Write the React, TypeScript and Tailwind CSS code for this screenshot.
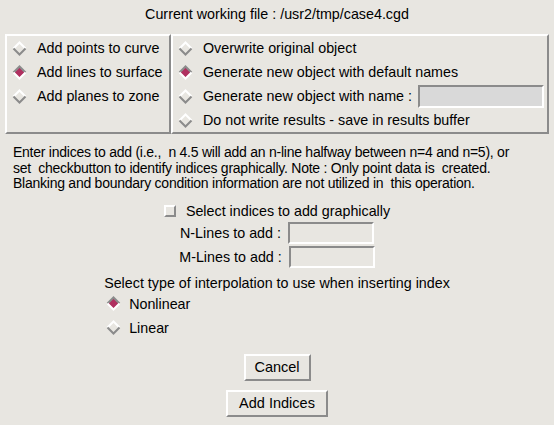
import React from "react";

const raised = "border-2 border-t-white border-l-white border-r-[#8b8b8b] border-b-[#8b8b8b]";
const sunken = "border-2 border-t-[#8b8b8b] border-l-[#8b8b8b] border-r-white border-b-white";

function Diamond({ on = false }: { on?: boolean }) {
  const top = on ? "#8b8b8b" : "#ffffff";
  const bottom = on ? "#ffffff" : "#8b8b8b";
  return (
    <svg width="15" height="15" viewBox="0 0 15 15" className="shrink-0">
      {on && <polygon points="7.5,2 13,7.5 7.5,13 2,7.5" fill="#b03060" />}
      <polyline points="1.5,7.5 7.5,1.5 13.5,7.5" fill="none" stroke={top} strokeWidth="2" />
      <polyline points="1.5,7.5 7.5,13.5 13.5,7.5" fill="none" stroke={bottom} strokeWidth="2" />
    </svg>
  );
}

function Radio({ label, on = false, children }: { label: string; on?: boolean; children?: React.ReactNode }) {
  return (
    <div className="flex h-[24px] items-center pl-[5px]">
      <Diamond on={on} />
      <span className="ml-[10px] whitespace-pre">{label}</span>
      {children}
    </div>
  );
}

export default function App() {
  return (
    <div
      className="flex h-[425px] w-[554px] flex-col bg-[#e8e6e1] text-[14.3px] leading-4 text-black"
      style={{ fontFamily: '"Liberation Sans", Arial, sans-serif' }}
    >
      <div className="h-[34px] pt-[6px] text-center">Current working file : /usr2/tmp/case4.cgd</div>

      <div className="flex h-[100px] px-[5px]">
        <div className={`w-[166px] ${raised}`}>
          <Radio label="Add points to curve" />
          <Radio label="Add lines to surface" on />
          <Radio label="Add planes to zone" />
        </div>
        <div className={`flex-1 ${raised}`}>
          <Radio label="Overwrite original object" />
          <Radio label="Generate new object with default names" on />
          <Radio label="Generate new object with name :">
            <div className={`ml-[6px] h-[23px] w-[126px] bg-[#d9d9d9] ${sunken}`} />
          </Radio>
          <Radio label="Do not write results - save in results buffer" />
        </div>
      </div>

      <p className="mt-[11px] whitespace-pre px-[13px] text-[14px] leading-[15.5px] tracking-[-0.25px]">
        {"Enter indices to add (i.e.,  n 4.5 will add an n-line halfway between n=4 and n=5), or"}
        <br />
        {"set  checkbutton to identify indices graphically. Note : Only point data is  created."}
        <br />
        {"Blanking and boundary condition information are not utilized in  this operation."}
      </p>

      <div className="flex flex-col items-center">
        <div className="mt-[11px] flex h-4 items-center">
          <div className="h-[12px] w-[12px] border-2 border-t-white border-l-white border-r-[#8b8b8b] border-b-[#8b8b8b]" />
          <span className="ml-[10px]">Select indices to add graphically</span>
        </div>
        <div className="mt-[3px] flex h-[22px] items-center gap-[7px]">
          <span>N-Lines to add :</span>
          <div className={`h-[22px] w-[86px] ${sunken}`} />
        </div>
        <div className="mt-[2px] flex h-[22px] items-center gap-[7px]">
          <span>M-Lines to add :</span>
          <div className={`h-[22px] w-[86px] ${sunken}`} />
        </div>

        <div className="mt-[7px] flex flex-col items-start">
          <div className="h-4">Select type of interpolation to use when inserting index</div>
          <div className="mt-px flex h-[24px] items-center pl-[2px]">
            <Diamond on />
            <span className="ml-[8px]">Nonlinear</span>
          </div>
          <div className="flex h-[24px] items-center pl-[2px]">
            <Diamond />
            <span className="ml-[8px]">Linear</span>
          </div>
        </div>

        <button className={`mt-[14px] h-[27px] w-[67px] bg-[#e8e6e1] text-[14.5px] ${raised}`}>Cancel</button>
        <button className={`mt-[9px] h-[27px] w-[102px] bg-[#e8e6e1] text-[14.5px] ${raised}`}>Add Indices</button>
      </div>
    </div>
  );
}
